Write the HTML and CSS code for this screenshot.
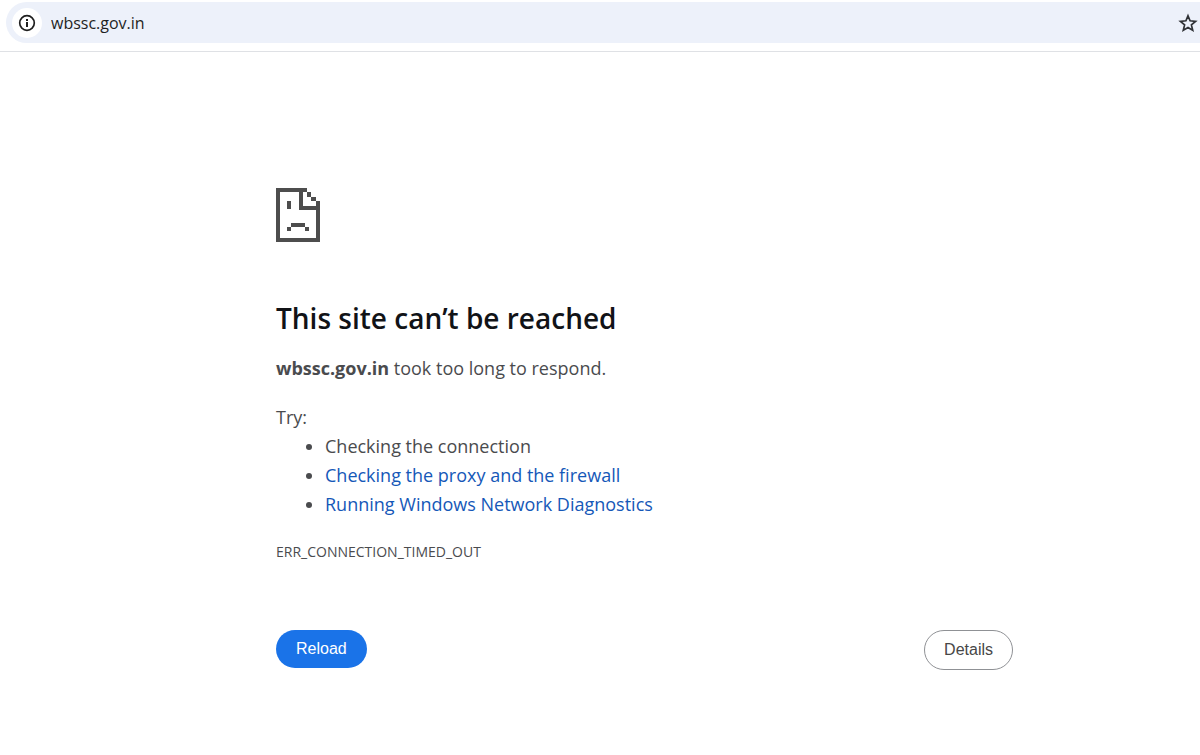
FILE: index.html
```html
<!DOCTYPE html>
<html lang="en">
<head>
    <meta charset="UTF-8">
    <meta name="viewport" content="width=device-width, initial-scale=1.0">
    <title>wbssc.gov.in</title>
    <link rel="stylesheet" href="styles.css">
</head>
<body>
    <header class="toolbar">
        <form class="address-bar">
            <button type="button" class="site-info" aria-label="View site information">
                <svg viewBox="0 0 18 18" width="18" height="18">
                    <circle cx="9" cy="9" r="7.3" fill="none" stroke="#1f1f1f" stroke-width="1.7"/>
                    <path d="M8 8h2v5H8zM8 5h2v2H8z" fill="#1f1f1f"/>
                </svg>
            </button>
            <input type="text" class="address" value="wbssc.gov.in" aria-label="Address" spellcheck="false">
            <button type="button" class="bookmark" aria-label="Bookmark this page">
                <svg viewBox="0 0 20 20" width="20" height="20">
                    <path d="M10 2.8l2.1 5 5.5.5-4.2 3.6 1.3 5.3L10 14.4l-4.7 2.8 1.3-5.3-4.2-3.6 5.5-.5z" fill="none" stroke="#303236" stroke-width="1.7"/>
                </svg>
            </button>
        </form>
    </header>

    <main class="error-page">
        <svg class="error-icon" viewBox="0 0 44 54" width="44" height="54" shape-rendering="crispEdges" aria-hidden="true">
            <!-- page outline with the folded corner -->
            <path d="M0 0h31v4h-4v14h13v-5h4v41H0zM4 4v46h36V22H23V4z" fill="#4d4d4d" fill-rule="evenodd"/>
            <path d="M31 4h4v5h-4zM35 9h5v4h-5z" fill="#4d4d4d"/>
            <!-- eye and mouth -->
            <path d="M11 13h4v8h-4zM15 35h14v4H15zM11 39h4v4h-4zM29 39h4v4h-4z" fill="#4d4d4d"/>
        </svg>
        <h1>This site can’t be reached</h1>
        <p class="summary"><strong>wbssc.gov.in</strong> took too long to respond.</p>
        <div class="suggestions">
            <p>Try:</p>
            <ul>
                <li>Checking the connection</li>
                <li><a href="#">Checking the proxy and the firewall</a></li>
                <li><a href="#">Running Windows Network Diagnostics</a></li>
            </ul>
        </div>
        <p class="error-code">ERR_CONNECTION_TIMED_OUT</p>
        <div class="buttons">
            <button type="button" class="reload">Reload</button>
            <button type="button" class="details">Details</button>
        </div>
    </main>
</body>
</html>
```
FILE: styles.css
```css
* {
    box-sizing: border-box;
}
body {
    margin: 0;
    background-color: #fff;
    color: #4a4b4e;
    font-family: "Open Sans", "Noto Sans", sans-serif;
    font-size: 18px;
    line-height: 29px;
}
.toolbar {
    height: 52px;
    padding: 2px 0 8px 6px;
    border-bottom: 1px solid #dfe1e5;
}
.address-bar {
    display: flex;
    align-items: center;
    height: 41px;
    padding: 0 2px 0 6px;
    background-color: #edf1fa;
    border-radius: 21px 0 0 21px;
}
.site-info, .bookmark {
    display: flex;
    align-items: center;
    justify-content: center;
    padding: 0;
    border: none;
    background: none;
}
.site-info {
    width: 30px;
    height: 30px;
    border-radius: 50%;
    background-color: #fff;
}
.address {
    flex-grow: 1;
    padding: 0 0 0 9px;
    border: none;
    outline: none;
    background: none;
    color: #1f1f1f;
    font-family: "Open Sans", "Noto Sans", sans-serif;
    font-size: 16px;
}
.error-page {
    max-width: 737px;
    margin: 136px 187px 0 auto;
}
.error-icon {
    display: block;
}
h1 {
    margin: 56px 0 0;
    color: #111317;
    font-size: 28px;
    font-weight: 600;
    line-height: 40px;
}
p {
    margin: 0;
}
.summary {
    margin-top: 16px;
}
.suggestions {
    margin-top: 20px;
}
ul {
    margin: 0;
    padding-left: 49px;
}
a {
    color: #1558b8;
    text-decoration: none;
}
.error-code {
    margin-top: 18px;
    font-size: 14px;
}
.buttons {
    display: flex;
    align-items: flex-start;
    justify-content: space-between;
    margin-top: 64px;
}
.reload, .details {
    border-radius: 20px;
    font-family: "Liberation Sans", Arial, sans-serif;
    font-size: 16px;
}
.reload {
    height: 38px;
    padding: 0 20px;
    border: none;
    background-color: #1a73e8;
    color: #fff;
}
.details {
    height: 40px;
    padding: 0 19px;
    border: 1px solid #8f9195;
    background-color: #fff;
    color: #474747;
}
```
